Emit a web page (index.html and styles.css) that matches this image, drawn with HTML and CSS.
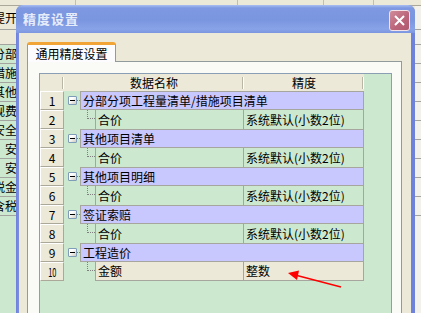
FILE: index.html
```html
<!DOCTYPE html>
<html lang="zh-CN">
<head>
<meta charset="utf-8">
<title>精度设置</title>
<link rel="stylesheet" href="styles.css">
</head>
<body>
<div class="app">
  <div class="app-top"><span class="c1"></span><span class="c2"></span><span class="c3"></span><span class="c4"></span></div>
  <div class="app-tool"><div class="lc">提开</div><div class="mc"></div><div class="rc"></div></div>
  <div class="app-head"><div class="lc"></div><div class="mc"></div><div class="rc"></div></div>
  <div class="app-row"><div class="lc">分部</div><div class="mc"></div><div class="rc"></div></div>
  <div class="app-row"><div class="lc">措施</div><div class="mc"></div><div class="rc"></div></div>
  <div class="app-row"><div class="lc">其他</div><div class="mc"></div><div class="rc"></div></div>
  <div class="app-row"><div class="lc">规费</div><div class="mc"></div><div class="rc"></div></div>
  <div class="app-row"><div class="lc">安全</div><div class="mc"></div><div class="rc"></div></div>
  <div class="app-row"><div class="lc">安</div><div class="mc"></div><div class="rc"></div></div>
  <div class="app-row"><div class="lc">安</div><div class="mc"></div><div class="rc"></div></div>
  <div class="app-row"><div class="lc">税金</div><div class="mc"></div><div class="rc"></div></div>
  <div class="app-row"><div class="lc">含税</div><div class="mc"></div><div class="rc"></div></div>
  <div class="app-rest"><div class="lc"></div><div class="mc"></div><div class="rc"></div></div>
</div>

<div class="dialog">
  <div class="titlebar">
    <span class="title">精度设置</span>
    <span class="close"><svg width="11" height="11" viewBox="0 0 11 11"><path d="M1 1 L10 10 M10 1 L1 10" stroke="#fff" stroke-width="2" fill="none"/></svg></span>
  </div>
  <div class="dbody">
    <div class="tabs"><div class="tab">通用精度设置</div></div>
    <div class="panel">
      <div class="grid">
        <div class="ghead">
          <div class="gh"></div>
          <div class="gh">数据名称</div>
          <div class="gh">精度</div>
        </div>

        <div class="grow">
          <div class="num">1</div>
          <div class="tw"><span class="box"></span><span class="hdot"></span></div>
          <div class="parent">分部分项工程量清单/措施项目清单</div>
        </div>
        <div class="grow">
          <div class="num">2</div>
          <div class="tree"><span class="elbow"></span></div>
          <div class="name">合价</div>
          <div class="val">系统默认(小数2位)</div>
        </div>

        <div class="grow">
          <div class="num">3</div>
          <div class="tw"><span class="box"></span><span class="hdot"></span></div>
          <div class="parent">其他项目清单</div>
        </div>
        <div class="grow">
          <div class="num">4</div>
          <div class="tree"><span class="elbow"></span></div>
          <div class="name">合价</div>
          <div class="val">系统默认(小数2位)</div>
        </div>

        <div class="grow">
          <div class="num">5</div>
          <div class="tw"><span class="box"></span><span class="hdot"></span></div>
          <div class="parent">其他项目明细</div>
        </div>
        <div class="grow">
          <div class="num">6</div>
          <div class="tree"><span class="elbow"></span></div>
          <div class="name">合价</div>
          <div class="val">系统默认(小数2位)</div>
        </div>

        <div class="grow">
          <div class="num">7</div>
          <div class="tw"><span class="box"></span><span class="hdot"></span></div>
          <div class="parent">签证索赔</div>
        </div>
        <div class="grow">
          <div class="num">8</div>
          <div class="tree"><span class="elbow"></span></div>
          <div class="name">合价</div>
          <div class="val">系统默认(小数2位)</div>
        </div>

        <div class="grow">
          <div class="num">9</div>
          <div class="tw"><span class="box"></span><span class="hdot"></span></div>
          <div class="parent">工程造价</div>
        </div>
        <div class="grow last">
          <div class="num"><span class="narrow">10</span></div>
          <div class="tree"><span class="elbow"></span></div>
          <div class="name">金额</div>
          <div class="val">整数</div>
        </div>
      </div>
    </div>
  </div>
</div>

<svg class="arrow" width="421" height="313" viewBox="0 0 421 313">
  <line x1="297" y1="275.5" x2="341" y2="287" stroke="#ff0000" stroke-width="1.6"/>
  <polygon points="288,273 299,270.5 297,280" fill="#ff0000"/>
</svg>
</body>
</html>
```

FILE: styles.css
```css
* { box-sizing: border-box; }
html, body { margin: 0; padding: 0; }
body {
  width: 421px;
  height: 313px;
  overflow: hidden;
  position: relative;
  font-family: "Noto Sans CJK SC", "Noto Sans", sans-serif;
  font-size: 12px;
  color: #000;
  background: #CCE8CF;
}

/* ---------- background application ---------- */
.app { display: flex; flex-direction: column; height: 313px; }
.app-top { display: flex; height: 6px; flex: none; background: #ECE9D8; border-bottom: 1px solid #ACA899; }
.app-top span { border-right: 1px solid #C2BFAF; height: 5px; }
.app-top .c1 { width: 76px; }
.app-top .c2 { width: 162px; }
.app-top .c3 { width: 86px; }
.app-top .c4 { width: 50px; }

.app-tool, .app-head, .app-row, .app-rest {
  display: grid;
  grid-template-columns: 17px 1fr 6px;
  flex: none;
}
.app-tool { height: 24px; background: #ECE9D8; border-bottom: 1px solid #A3A3A0; }
.app-head { height: 15px; background: #ECE9D8; border-bottom: 1px solid #A3A3A0; }
.app-row { height: 19px; border-bottom: 1px solid #A3A3A0; }
.app-rest { flex: 1; }
.lc {
  display: flex;
  justify-content: flex-end;
  align-items: center;
  overflow: hidden;
  white-space: nowrap;
  line-height: 18px;
  font-size: 12px;
}
.app-row .lc, .app-rest .lc { background: #CCE8CF; }
.mc { background: #ECE9D8; }
.rc { background: #F2F1EC; }

/* ---------- dialog window ---------- */
.dialog {
  position: absolute;
  left: 16px;
  top: 5px;
  width: 399px;
  height: 308px;
  display: flex;
  flex-direction: column;
  background: linear-gradient(to right, #6C80DA, #7A8CE0 2px, #6F82DB);
  border-radius: 7px 7px 0 0;
  overflow: hidden;
}
.titlebar {
  flex: none;
  height: 28px;
  display: flex;
  align-items: center;
  justify-content: space-between;
  padding: 0 5px 0 7px;
  background: linear-gradient(to bottom, #AABEF1 0px, #7E99E1 3px, #7A96DF 15px, #88A3E7 24px, #7C97E0 28px);
}
.title {
  color: #E6ECFA;
  font-weight: bold;
  font-size: 13px;
  letter-spacing: 1px;
  line-height: 16px;
}
.close {
  width: 21px;
  height: 21px;
  margin-top: 3px;
  border: 1px solid #F3E3E8;
  border-radius: 3px;
  background: linear-gradient(135deg, #D08C9A, #BA6379 60%, #B05A70);
  display: flex;
  align-items: center;
  justify-content: center;
}
.close svg { display: block; }

.dbody {
  flex: 1;
  margin: 0 4px 0 3px;
  background: #ECE9D8;
  padding: 9px 9px 0 8px;
  display: flex;
  flex-direction: column;
}
.tabs { display: flex; flex: none; }
.tab {
  position: relative;
  z-index: 1;
  width: 89px;
  height: 20px;
  margin-bottom: -1px;
  background: #FCFCFE;
  border: 1px solid #919B9C;
  border-top: 3px solid #F1A536;
  border-bottom: none;
  border-radius: 3px 3px 0 0;
  text-align: center;
  line-height: 17px;
  white-space: nowrap;
}
.panel {
  flex: 1;
  border: 1px solid #919B9C;
  border-bottom: none;
  background: #FAFAF7;
  padding: 11px 9px 0 11px;
  display: flex;
  flex-direction: column;
}

/* ---------- grid ---------- */
.grid {
  flex: 1;
  border: 1px solid #8A9FB3;
  border-bottom: none;
  background: #CCE8CF;
}
.ghead {
  display: grid;
  grid-template-columns: 24px 180px 120px 1fr;
  height: 17px;
}
.gh {
  background:
    linear-gradient(#B9B6A6, #B9B6A6) right 1px center / 1px 12px no-repeat,
    linear-gradient(#FFFFFF, #FFFFFF) right 0 center / 1px 12px no-repeat,
    #ECE9D8;
  text-align: center;
  line-height: 17px;
}

.grow {
  display: grid;
  grid-template-columns: 24px 16px 15px 149px 120px 1fr;
  height: 19px;
}
.num {
  grid-column: 1;
  background: #ECE9D8;
  border-top: 1px solid #FFFFFF;
  border-left: 1px solid #FFFFFF;
  border-right: 1px solid #ACA899;
  border-bottom: 1px solid #ACA899;
  text-align: center;
  line-height: 17px;
}
.narrow {
  display: inline-block;
  transform: scaleX(0.62);
  letter-spacing: -0.5px;
}
.tw {
  grid-column: 2;
  display: flex;
  align-items: center;
  padding-left: 4px;
}
.box {
  flex: none;
  width: 9px;
  height: 9px;
  border: 1px solid #7F9DB9;
  border-radius: 1px;
  background: linear-gradient(135deg, #FFFFFF 35%, #CFCBBE);
  display: flex;
  align-items: center;
  justify-content: center;
}
.box::before {
  content: "";
  width: 5px;
  height: 1px;
  background: #000;
}
.hdot {
  flex: none;
  width: 3px;
  border-top: 1px dotted #808080;
}
.parent {
  grid-column: 3 / 6;
  background: #C8C8FF;
  border: 1px solid #A7A69E;
  line-height: 17px;
  padding-left: 2px;
  white-space: nowrap;
  overflow: hidden;
}
.tree {
  grid-column: 2 / 4;
  padding-left: 23px;
}
.elbow {
  display: block;
  width: 8px;
  height: 9px;
  border-left: 1px dotted #808080;
  border-bottom: 1px dotted #808080;
}
.name {
  grid-column: 4;
  border-left: 1px solid #A7A69E;
  border-right: 1px solid #A7A69E;
  padding-left: 2px;
  line-height: 19px;
  white-space: nowrap;
}
.val {
  grid-column: 5;
  border-right: 1px solid #A7A69E;
  padding-left: 2px;
  line-height: 19px;
  white-space: nowrap;
}
.last .name, .last .val {
  background: #ECE9D8;
  border-bottom: 1px solid #A7A69E;
  line-height: 18px;
}

/* ---------- annotation ---------- */
.arrow {
  position: absolute;
  left: 0;
  top: 0;
  pointer-events: none;
}
```
